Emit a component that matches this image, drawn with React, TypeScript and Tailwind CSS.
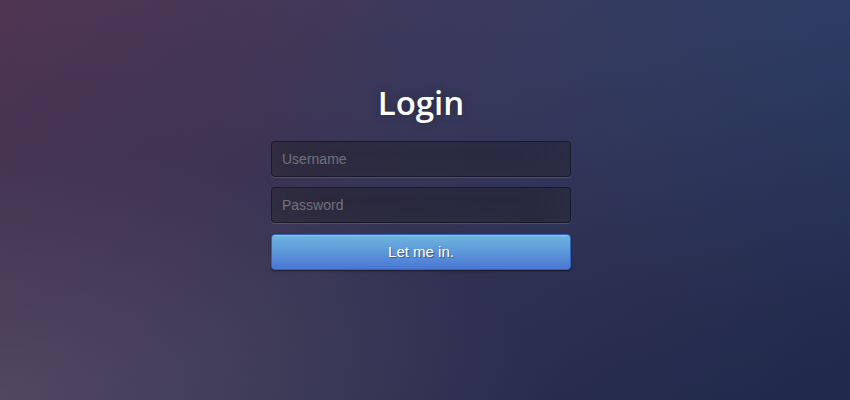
import React from 'react';

export default function App() {
  return (
    <div className="min-h-screen w-full pr-[8px] bg-[radial-gradient(ellipse_at_0%_100%,rgba(110,100,120,0.45)_0%,rgba(110,100,120,0)_45%),radial-gradient(ellipse_at_100%_0%,rgba(40,75,120,0.35)_0%,rgba(40,75,120,0)_55%),linear-gradient(to_bottom,rgba(60,90,140,0.12)_0%,rgba(30,40,70,0.25)_100%),linear-gradient(135deg,#52304a_0%,#3a3353_45%,#1f2a4f_100%)] flex justify-center">
      <div className="w-[300px] pt-[82px] flex flex-col">
        <h1 className="text-center text-white text-[33px] font-semibold leading-[42px] [text-shadow:0_0_10px_rgba(0,0,0,0.3)] [font-family:'Open_Sans',sans-serif]">
          Login
        </h1>
        <form className="mt-[17px] flex flex-col" onSubmit={(e) => e.preventDefault()}>
          <input
            type="text"
            placeholder="Username"
            className="h-[36px] w-full mb-[10px] px-[10px] text-[14px] text-white placeholder:text-[#727279] bg-[rgba(0,0,0,0.3)] border border-[rgba(0,0,0,0.3)] rounded-[4px] outline-none shadow-[inset_0_-5px_45px_rgba(100,100,100,0.2),0_1px_1px_rgba(255,255,255,0.15)] [font-family:'Liberation_Sans',Arial,sans-serif]"
          />
          <input
            type="password"
            placeholder="Password"
            className="h-[36px] w-full mb-[11px] px-[10px] text-[14px] text-white placeholder:text-[#727279] bg-[rgba(0,0,0,0.3)] border border-[rgba(0,0,0,0.3)] rounded-[4px] outline-none shadow-[inset_0_-5px_45px_rgba(100,100,100,0.2),0_1px_1px_rgba(255,255,255,0.15)] [font-family:'Liberation_Sans',Arial,sans-serif]"
          />
          <button
            type="submit"
            className="h-[36px] w-full rounded-[4px] border border-[#3762bc] bg-[#4a77d4] bg-[linear-gradient(to_bottom,#6eb6de,#4a77d4)] text-white text-[15px] [text-shadow:1px_1px_1px_rgba(0,0,0,0.4)] shadow-[inset_0_1px_0_rgba(255,255,255,0.2),0_1px_2px_rgba(0,0,0,0.5)] [font-family:'Liberation_Sans',Arial,sans-serif]"
          >
            Let me in.
          </button>
        </form>
      </div>
    </div>
  );
}
